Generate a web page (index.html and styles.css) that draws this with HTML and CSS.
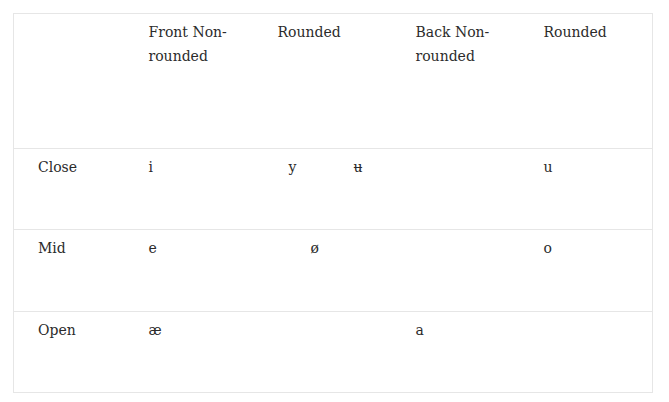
FILE: index.html
```html
<!DOCTYPE html>
<html>
<head>
<meta charset="utf-8">
<link rel="stylesheet" href="styles.css">
</head>
<body>
<table class="vowels">
  <colgroup>
    <col class="c1"><col class="c2"><col class="c3"><col class="c4"><col class="c5">
  </colgroup>
  <thead>
    <tr class="head">
      <th></th>
      <th>Front Non-<br>rounded</th>
      <th>Rounded</th>
      <th>Back Non-<br>rounded</th>
      <th>Rounded</th>
    </tr>
  </thead>
  <tbody>
    <tr class="row">
      <td>Close</td>
      <td>i</td>
      <td><span class="y">y</span><span class="u">ʉ</span></td>
      <td></td>
      <td>u</td>
    </tr>
    <tr class="row row-mid">
      <td>Mid</td>
      <td>e</td>
      <td><span class="oe">ø</span></td>
      <td></td>
      <td>o</td>
    </tr>
    <tr class="row">
      <td>Open</td>
      <td>æ</td>
      <td></td>
      <td>a</td>
      <td></td>
    </tr>
  </tbody>
</table>
</body>
</html>
```

FILE: styles.css
```css
html, body {
  margin: 0;
  background: #ffffff;
}
body {
  padding: 13px;
  font-family: "DejaVu Serif", "Liberation Serif", serif;
  font-size: 14px;
  line-height: 24px;
  color: #2b2b2b;
}
.vowels {
  border-collapse: collapse;
  table-layout: fixed;
  width: 639px;
  border: 1px solid #e6e6e6;
}
.c1 { width: 111px; }
.c2 { width: 129px; }
.c3 { width: 138px; }
.c4 { width: 128px; }
.c5 { width: 133px; }
.vowels th,
.vowels td {
  text-align: left;
  font-weight: normal;
  vertical-align: top;
  padding: 6px 8px 0 24px;
}
.head {
  height: 135px;
  border-bottom: 1px solid #e6e6e6;
}
.row {
  height: 81px;
  border-bottom: 1px solid #e6e6e6;
}
.row-mid { height: 82px; }
.y { margin-left: 11px; }
.u { margin-left: 57px; }
.oe { margin-left: 33px; }
```
